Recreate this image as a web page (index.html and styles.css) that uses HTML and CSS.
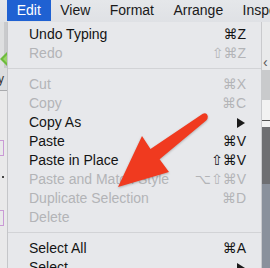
FILE: index.html
```html
<!DOCTYPE html>
<html>
<head>
<meta charset="utf-8">
<link rel="stylesheet" href="styles.css">
</head>
<body>
<div class="screen">
  <div class="menubar">
    <span class="mb-item active">Edit</span>
    <span class="mb-item">View</span>
    <span class="mb-item">Format</span>
    <span class="mb-item">Arrange</span>
    <span class="mb-item">Inspector</span>
  </div>
  <div class="stage">
    <div class="left-strip">
      <div class="ls-top"></div>
      <div class="ls-green">
        <svg width="7" height="16" viewBox="0 0 7 16"><path d="M7 1 L0 8 L7 15 Z" fill="#6dbb3c"/><path d="M7 4 L3 8 L7 12 Z" fill="#9ad46a"/></svg>
      </div>
      <div class="ls-mid"><span class="ls-y">y</span></div>
      <div class="ls-bottom">
        <span class="ls-mark m1"></span>
        <span class="ls-dot"></span>
        <span class="ls-mark m2"></span>
      </div>
    </div>
    <div class="menu">
      <div class="item"><span class="label">Undo Typing</span><span class="key">⌘Z</span></div>
      <div class="item disabled"><span class="label">Redo</span><span class="key">⇧⌘Z</span></div>
      <div class="sep"></div>
      <div class="item disabled"><span class="label">Cut</span><span class="key">⌘X</span></div>
      <div class="item disabled"><span class="label">Copy</span><span class="key">⌘C</span></div>
      <div class="item"><span class="label">Copy As</span><span class="sub"></span></div>
      <div class="item"><span class="label">Paste</span><span class="key">⌘V</span></div>
      <div class="item"><span class="label">Paste in Place</span><span class="key">⇧⌘V</span></div>
      <div class="item disabled"><span class="label">Paste and Match Style</span><span class="key">⌥⇧⌘V</span></div>
      <div class="item disabled"><span class="label">Duplicate Selection</span><span class="key">⌘D</span></div>
      <div class="item disabled"><span class="label">Delete</span></div>
      <div class="sep"></div>
      <div class="item"><span class="label">Select All</span><span class="key">⌘A</span></div>
      <div class="item"><span class="label">Select</span><span class="sub"></span></div>
    </div>
    <div class="right-strip">
      <div class="rs-light"><span class="rs-chev">‹</span></div>
      <div class="rs-gray"></div>
      <div class="rs-white"></div>
      <div class="rs-line"></div>
      <div class="rs-dark"></div>
      <div class="rs-blue"></div>
    </div>
  </div>
  <svg class="arrow" width="270" height="268" viewBox="0 0 270 268">
    <path d="M118 187 L142 136 L150.5 149 L202.8 113.8 Q206.8 112.2 207.8 116.4 Q207.8 119.4 206.2 120.4 L159.6 159.2 L169 172 Z" fill="#f03a1f"/>
  </svg>
</div>
</body>
</html>
```

FILE: styles.css
```css
html, body {
  margin: 0;
  padding: 0;
}
body {
  width: 270px;
  height: 268px;
  overflow: hidden;
  font-family: "Liberation Sans", "DejaVu Sans", Arial, sans-serif;
  font-size: 14px;
  background: #e6e7ea;
}
.screen {
  position: relative;
  width: 270px;
  height: 268px;
  overflow: hidden;
}
.menubar {
  height: 22px;
  display: flex;
  align-items: stretch;
  padding-left: 7px;
  background: linear-gradient(#e5e7ea, #dfe1e5);
  white-space: nowrap;
  color: #1a1a1a;
}
.mb-item {
  padding: 0 9.7px;
  line-height: 21px;
  height: 21px;
}
.mb-item.active {
  background: #1f61d2;
  color: #ffffff;
}
.stage {
  display: flex;
  height: 246px;
}
.left-strip {
  width: 7px;
  display: flex;
  flex-direction: column;
  background: #e9e9ea;
  border-right: 1px solid #c5c6c9;
}
.ls-top {
  height: 28px;
  background: linear-gradient(90deg, #dedfe0 0 4px, #c9cacc 4px);
}
.ls-green {
  height: 18px;
  display: flex;
  align-items: center;
  background: linear-gradient(90deg, #dedfe0 0 4px, #c9cacc 4px);
}
.ls-green svg { display: block; }
.ls-mid {
  height: 22px;
  background: #dcdddf;
  border-bottom: 1px solid #a9aaad;
  position: relative;
  overflow: hidden;
}
.ls-y {
  display: block;
  margin-top: 4px;
  margin-left: -2px;
  font-size: 12px;
  line-height: 14px;
  color: #333;
}
.ls-bottom {
  flex: 1;
  display: flex;
  flex-direction: column;
  align-items: flex-start;
}
.ls-mark {
  display: block;
  width: 3px;
  height: 14px;
  border: 1px solid #c99ad6;
  border-left: none;
}
.m1 { margin-top: 49px; }
.m2 { margin-top: 32px; }
.ls-dot {
  display: block;
  width: 2px;
  height: 2px;
  background: #444;
  margin-top: 20px;
  margin-left: 2px;
}
.menu {
  width: 253px;
  padding: 3px 0 0;
  background: #e7e8eb;
  color: #141414;
  border-right: 1px solid #c9cacd;
}
.item {
  display: flex;
  align-items: center;
  height: 19px;
  line-height: 19px;
  padding: 0 15px 0 21px;
  white-space: nowrap;
}
.item.disabled {
  color: #b3b4b7;
}
.key {
  margin-left: auto;
  font-family: "Liberation Sans", "DejaVu Sans", sans-serif;
}
.sub {
  margin-left: auto;
  margin-right: 1px;
  width: 0;
  height: 0;
  border-top: 5px solid transparent;
  border-bottom: 5px solid transparent;
  border-left: 8px solid #1a1a1a;
}
.sep {
  height: 1px;
  margin: 5px 0 6px;
  background: #d2d3d6;
}
.right-strip {
  flex: 1;
  display: flex;
  flex-direction: column;
}
.rs-light {
  height: 48px;
  background: #e9eaeb;
  display: flex;
  align-items: flex-end;
}
.rs-chev {
  display: block;
  margin-left: 1px;
  color: #555;
  font-size: 14px;
  line-height: 12px;
  margin-bottom: 2px;
}
.rs-gray {
  height: 30px;
  background: #c9cacc;
}
.rs-white {
  height: 20px;
  background: #f2f2f2;
}
.rs-line {
  height: 6px;
  background: #f2f2f2;
  border-top: 1px solid #555;
}
.rs-dark {
  height: 57px;
  background: #6e6f72;
}
.rs-blue {
  flex: 1;
  background: #8a919c;
}
.arrow {
  position: absolute;
  left: 0;
  top: 0;
  filter: drop-shadow(0 1px 1px rgba(0,0,0,0.25));
}
```
